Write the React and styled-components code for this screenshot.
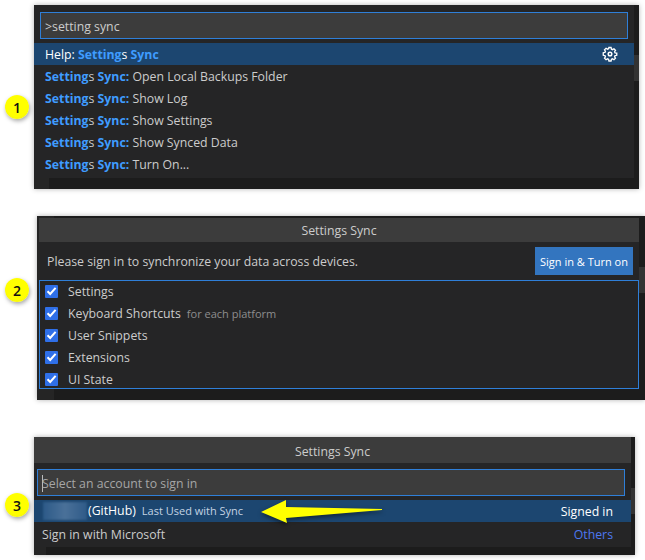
import React from 'react';
import styled, { createGlobalStyle } from 'styled-components';

const GlobalStyle = createGlobalStyle`
  html, body {
    margin: 0;
    background: #fff;
  }
  body {
    font-family: "Open Sans", "Liberation Sans", sans-serif;
    font-size: 12.3px;
    color: #ccc;
    width: 645px;
    height: 560px;
    overflow: hidden;
  }
`;

const Page = styled.div`
  position: relative;
  display: flex;
  flex-direction: column;
  height: 560px;
  padding-top: 5px;
  box-sizing: border-box;
`;

const Badge = styled.div`
  position: absolute;
  left: 5px;
  top: ${(p) => p.$top}px;
  width: 24px;
  height: 24px;
  border-radius: 50%;
  background: radial-gradient(circle at 50% 45%, #ffff00 60%, #e6e620 100%);
  box-shadow: 1px 2px 4px rgba(0, 0, 0, 0.35);
  color: #111;
  font-size: 14px;
  font-weight: 600;
  display: flex;
  align-items: center;
  justify-content: center;
`;

const Panel = styled.div`
  display: flex;
  align-items: flex-start;
  margin-left: ${(p) => p.$left}px;
  width: ${(p) => p.$width}px;
  height: ${(p) => p.$height}px;
  margin-top: ${(p) => p.$gap || 0}px;
  padding: ${(p) => p.$padding || 0};
  background: linear-gradient(90deg, #252525 ${(p) => p.$gutter}px, #1c1c1c ${(p) => p.$gutter}px);
  box-shadow: 0 0 5px rgba(0, 0, 0, 0.3);
  box-sizing: border-box;
  flex: none;
`;

const Widget = styled.div`
  background: #252526;
  width: ${(p) => p.$width}px;
  flex: none;
  display: flex;
  flex-direction: column;
  padding-bottom: ${(p) => p.$bottom || 0}px;
`;

const Thumb = styled.div`
  width: ${(p) => p.$width}px;
  height: 26px;
  margin-top: ${(p) => p.$top}px;
  background: #333;
  flex: none;
`;

const Title = styled.div`
  height: ${(p) => p.$height}px;
  box-sizing: border-box;
  padding-top: ${(p) => p.$nudge || 0}px;
  background: #3c3c3c;
  display: flex;
  align-items: center;
  justify-content: center;
  color: #ccc;
`;

const InputWrap = styled.div`
  padding: ${(p) => p.$padding};
`;

const Input = styled.div`
  height: 27px;
  box-sizing: border-box;
  border: 1px solid #2f7fd8;
  background: #3c3c3c;
  display: flex;
  align-items: center;
  padding: 1px 0 0 4px;
  color: ${(p) => (p.$placeholder ? '#a6a6a6' : '#ccc')};
`;

const Caret = styled.span`
  width: 1px;
  height: 17px;
  background: #bbb;
  margin-right: -1px;
`;

const Row = styled.div`
  height: ${(p) => p.$height || 22}px;
  display: flex;
  align-items: center;
  justify-content: space-between;
  padding: 0 ${(p) => p.$right}px 0 ${(p) => p.$pad}px;
  background: ${(p) => (p.$active ? '#1c4670' : 'transparent')};
  color: ${(p) => (p.$active ? '#fff' : '#ccc')};
`;

const Label = styled.span`
  white-space: nowrap;
`;

const Match = styled.b`
  color: #3f9cff;
  font-weight: 700;
`;

const Hint = styled.span`
  margin-left: 6px;
  font-size: 11px;
  color: ${(p) => (p.$active ? '#c3d3e3' : '#8e8e8e')};
`;

const Blur = styled.span`
  display: inline-block;
  width: 44px;
  height: 18px;
  vertical-align: middle;
  margin-right: 1px;
  background: linear-gradient(90deg, #2d5a88, #4a7199 50%, #2f5b88);
  filter: blur(1px);
`;

const Message = styled.div`
  height: 38px;
  display: flex;
  align-items: center;
  justify-content: space-between;
  padding: 0 6px 0 8px;
`;

const Button = styled.button`
  width: 98px;
  height: 28px;
  border: 0;
  padding: 0;
  background: #3375bf;
  color: #fff;
  font: inherit;
  font-size: 11px;
`;

const List = styled.div`
  outline: 1px solid #2f7fd8;
  outline-offset: -1px;
  height: 109px;
  display: flex;
  flex-direction: column;
`;

const CheckRow = styled.div`
  height: 22px;
  flex: none;
  display: flex;
  align-items: center;
  padding-left: 6px;
  gap: 10px;
`;

const Check = styled.span`
  width: 13px;
  height: 13px;
  border-radius: 1px;
  background: #2f6fe8;
  display: flex;
  align-items: center;
  justify-content: center;
  flex: none;
`;

const Link = styled.span`
  color: #4d78f0;
`;

const ArrowSvg = styled.svg`
  position: absolute;
  left: 258px;
  top: 498px;
  filter: drop-shadow(0 2px 2px rgba(0, 0, 0, 0.5));
`;

const Tick = () => (
  <svg width="11" height="10" viewBox="0 0 11 10">
    <path d="M1.5 5.2 L4.2 8 L9.6 1.8" fill="none" stroke="#fff" strokeWidth="2" />
  </svg>
);

const Gear = () => (
  <svg width="16" height="16" viewBox="0 0 16 16" fill="none" stroke="#fff" strokeWidth="1.5">
    <path d="M6.8 1.2h2.4l.4 1.9 1.2.5 1.6-1 1.7 1.7-1 1.6.5 1.2 1.9.4v2.4l-1.9.4-.5 1.2 1 1.6-1.7 1.7-1.6-1-1.2.5-.4 1.9H6.8l-.4-1.9-1.2-.5-1.6 1-1.7-1.7 1-1.6-.5-1.2-1.9-.4V7l1.9-.4.5-1.2-1-1.6 1.7-1.7 1.6 1 1.2-.5z" transform="translate(0.8 0.4) scale(0.9)" />
    <circle cx="8" cy="8" r="1.8" />
  </svg>
);

const SyncPrefix = () => (
  <>
    <Match>Setting</Match>s <Match>Sync:</Match>
  </>
);

const commands = [
  'Open Local Backups Folder',
  'Show Log',
  'Show Settings',
  'Show Synced Data',
  'Turn On...',
];

const syncItems = [
  { name: 'Settings' },
  { name: 'Keyboard Shortcuts', hint: 'for each platform' },
  { name: 'User Snippets' },
  { name: 'Extensions' },
  { name: 'UI State' },
];

export default function App() {
  return (
    <Page>
      <GlobalStyle />
      <Badge $top={95}>1</Badge>
      <Badge $top={278}>2</Badge>
      <Badge $top={493}>3</Badge>

      <Panel $left={34} $width={605} $height={184} $gutter={15}>
        <Widget $width={600} $bottom={3}>
          <InputWrap $padding="7px 6px 4px 6px">
            <Input>&gt;setting sync</Input>
          </InputWrap>
          <Row $active $pad={11} $right={16}>
            <Label>
              Help: <Match>Setting</Match>s <Match>Sync</Match>
            </Label>
            <Gear />
          </Row>
          {commands.map((c) => (
            <Row key={c} $pad={11} $right={16}>
              <Label>
                <SyncPrefix /> {c}
              </Label>
            </Row>
          ))}
        </Widget>
        <Thumb $width={5} $top={50} />
      </Panel>

      <Panel $left={37} $width={608} $height={184} $gap={27} $gutter={17} $padding="2px 0 0 2px">
        <Widget $width={600}>
          <Title $height={24}>Settings Sync</Title>
          <Message>
            <Label>Please sign in to synchronize your data across devices.</Label>
            <Button>Sign in &amp; Turn on</Button>
          </Message>
          <List>
            {syncItems.map((item) => (
              <CheckRow key={item.name}>
                <Check>
                  <Tick />
                </Check>
                <Label>
                  {item.name}
                  {item.hint && <Hint>{item.hint}</Hint>}
                </Label>
              </CheckRow>
            ))}
          </List>
        </Widget>
        <Thumb $width={6} $top={49} />
      </Panel>

      <Panel $left={34} $width={601} $height={118} $gap={37} $gutter={12}>
        <Widget $width={597}>
          <Title $height={26} $nudge={2}>Settings Sync</Title>
          <InputWrap $padding="6px 6px 4px 3px">
            <Input $placeholder>
              <Caret />
              Select an account to sign in
            </Input>
          </InputWrap>
          <Row $active $pad={9} $right={18}>
            <Label>
              <Blur />(GitHub)<Hint $active>Last Used with Sync</Hint>
            </Label>
            <Label>Signed in</Label>
          </Row>
          <Row $height={25} $pad={8} $right={18}>
            <Label>Sign in with Microsoft</Label>
            <Link>Others</Link>
          </Row>
        </Widget>
        <Thumb $width={4} $top={51} />
      </Panel>

      <ArrowSvg width="130" height="30" viewBox="0 0 130 30">
        <path d="M3 14 L28 2 L28 9 L124 11 L124 12 L28 20 L29 25 Z" fill="#ffff00" />
      </ArrowSvg>
    </Page>
  );
}
